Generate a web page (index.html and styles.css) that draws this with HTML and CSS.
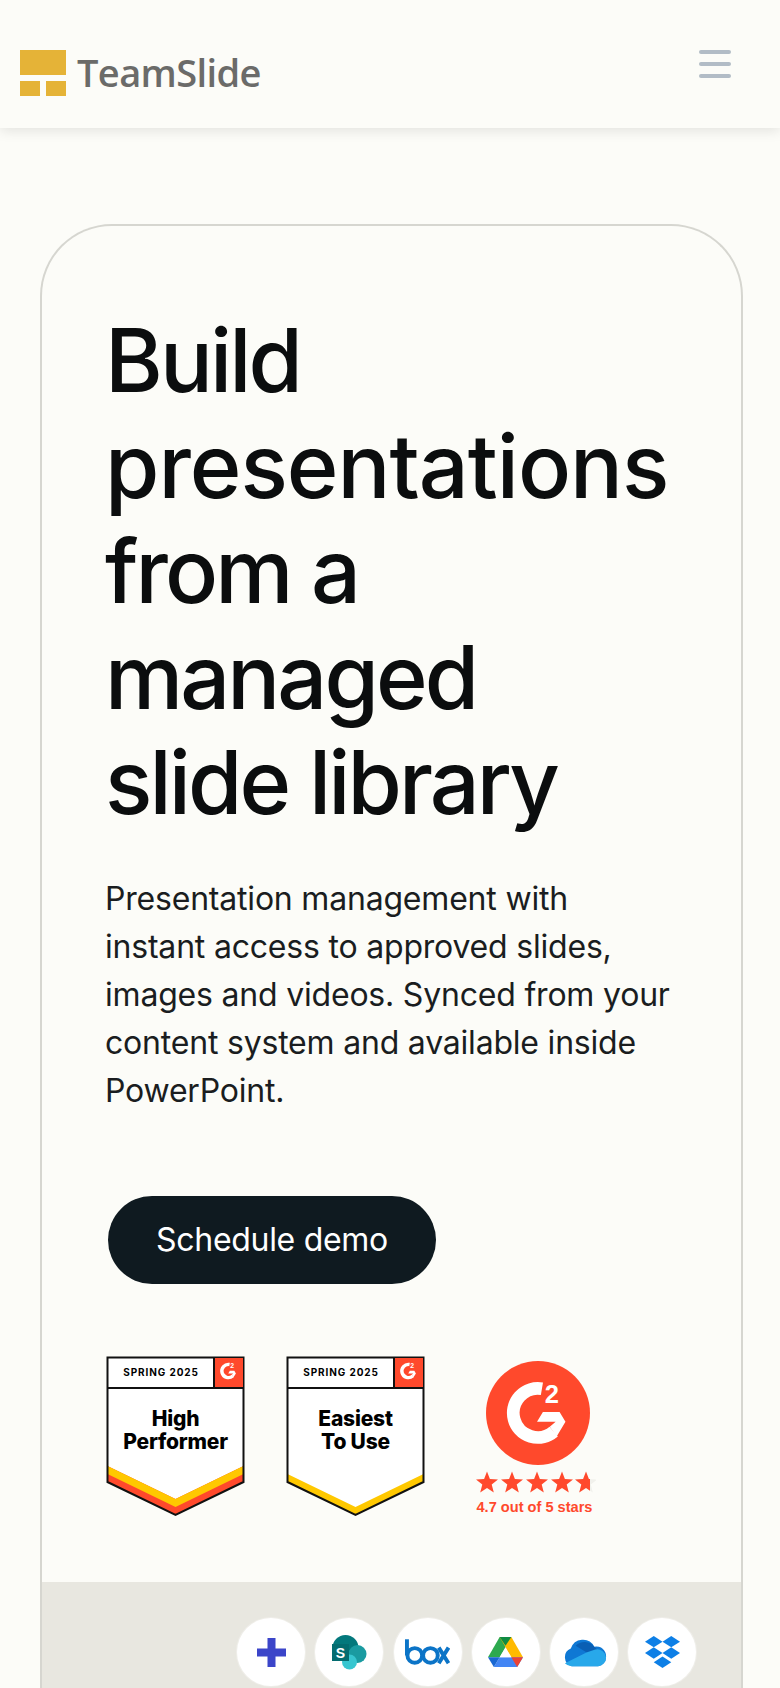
FILE: index.html
```html
<!DOCTYPE html>
<html lang="en">
<head>
    <meta charset="UTF-8">
    <meta name="viewport" content="width=device-width, initial-scale=1.0">
    <title>TeamSlide</title>
    <link rel="stylesheet" href="styles.css">
</head>
<body>
    <svg class="svg-defs" width="0" height="0">
        <defs>
            <symbol id="g2-mark" viewBox="0 0 106 106">
                <path d="M57 28.300 A25 25 0 1 0 69 72" fill="none" stroke="#fff" stroke-width="13"/>
                <polygon points="52,62 58,52 75,52 81,62 72,77 65,67 71,62" fill="#fff"/>
                <text x="60" y="43" class="g2-two">2</text>
            </symbol>
            <polygon id="star" points="11,0.500 13.900,8 22,8.600 15.700,13.600 17.800,21.500 11,17 4.200,21.500 6.300,13.600 0,8.600 8.100,8"/>
            <clipPath id="star-clip"><rect x="0" y="0" width="15" height="24"/></clipPath>
        </defs>
    </svg>

    <header class="site-header">
        <a class="logo" href="#">
            <span class="logo-mark">
                <span class="logo-top"></span>
                <span class="logo-bottom"><span></span><span></span></span>
            </span>
            <span class="logo-text">TeamSlide</span>
        </a>
        <div class="menu-icon"><span></span><span></span><span></span></div>
    </header>

    <main class="hero-wrap">
        <section class="hero-card">
            <div class="hero-content">
                <h1>Build <span class="wide-word">presentations</span> from a managed slide library</h1>
                <p class="hero-text">Presentation management with instant access to approved slides, images and videos. Synced from your content system and available inside PowerPoint.</p>
                <a class="demo-btn" href="#">Schedule demo</a>

                <div class="badges">
                    <div class="badge">
                        <svg class="badge-shape" viewBox="0 0 139 161">
                            <polygon points="1.500,1.500 137.500,1.500 137.500,126 69.500,159 1.500,126" fill="#fff"/>
                            <polygon points="1.500,110 69.500,143 137.500,110 137.500,126 69.500,159 1.500,126" fill="#ff492c"/>
                            <polygon points="1.500,110 69.500,143 137.500,110 137.500,118 69.500,151 1.500,118" fill="#ffc800"/>
                            <polygon points="1.500,1.500 137.500,1.500 137.500,126 69.500,159 1.500,126" fill="none" stroke="#111" stroke-width="2"/>
                            <rect x="108" y="2" width="29" height="30" fill="#ff492c"/>
                            <path d="M1.500 32 H137.500 M108 2 V32" stroke="#111" stroke-width="2"/>
                            <use href="#g2-mark" x="108.500" y="1" width="28" height="28"/>
                        </svg>
                        <span class="badge-season">SPRING 2025</span>
                        <span class="badge-title">High<br>Performer</span>
                    </div>
                    <div class="badge">
                        <svg class="badge-shape" viewBox="0 0 139 161">
                            <polygon points="1.500,1.500 137.500,1.500 137.500,126 69.500,159 1.500,126" fill="#fff"/>
                            <polygon points="1.500,118 69.500,151 137.500,118 137.500,126 69.500,159 1.500,126" fill="#ffc800"/>
                            <polygon points="1.500,1.500 137.500,1.500 137.500,126 69.500,159 1.500,126" fill="none" stroke="#111" stroke-width="2"/>
                            <rect x="108" y="2" width="29" height="30" fill="#ff492c"/>
                            <path d="M1.500 32 H137.500 M108 2 V32" stroke="#111" stroke-width="2"/>
                            <use href="#g2-mark" x="108.500" y="1" width="28" height="28"/>
                        </svg>
                        <span class="badge-season">SPRING 2025</span>
                        <span class="badge-title">Easiest<br>To Use</span>
                    </div>
                    <div class="rating">
                        <svg class="g2-circle" viewBox="0 0 106 106">
                            <circle cx="53" cy="53" r="53" fill="#ff492c"/>
                            <use href="#g2-mark" width="106" height="106"/>
                        </svg>
                        <svg class="g2-stars" viewBox="0 0 120 24">
                            <use href="#star" x="0" fill="#ff492c"/>
                            <use href="#star" x="25" fill="#ff492c"/>
                            <use href="#star" x="50" fill="#ff492c"/>
                            <use href="#star" x="75" fill="#ff492c"/>
                            <g transform="translate(99 0)"><use href="#star" fill="#f1f1ec"/><use href="#star" fill="#ff492c" clip-path="url(#star-clip)"/></g>
                        </svg>
                        <span class="rating-text">4.7 out of 5 stars</span>
                    </div>
                </div>
            </div>

            <div class="integrations">
                <span class="int-circle">
                    <svg class="int-plus" viewBox="0 0 29 29"><path d="M10.500 0 h8 v10.500 H29 v8 H18.500 V29 h-8 V18.500 H0 v-8 h10.500z" fill="#3b45c9"/></svg>
                </span>
                <span class="int-circle">
                    <svg viewBox="0 0 35 35">
                        <circle cx="13.500" cy="13" r="13" fill="#03787c"/>
                        <circle cx="25.500" cy="19" r="9" fill="#1a9ba1"/>
                        <circle cx="17.500" cy="27" r="7.500" fill="#37c6d0"/>
                        <rect x="0" y="9" width="17" height="17" fill="#036c70"/>
                        <text x="8.500" y="22.500" class="sp-letter">S</text>
                    </svg>
                </span>
                <span class="int-circle">
                    <svg viewBox="0 0 46 26" class="int-box">
                        <g fill="none" stroke="#0b74c7" stroke-width="4">
                            <path d="M2 0 V16.500"/>
                            <circle cx="10" cy="16.500" r="7.500"/>
                            <circle cx="26" cy="16.500" r="7.500"/>
                            <path d="M34.500 8.500 L44.500 24.500 M44.500 8.500 L34.500 24.500"/>
                        </g>
                    </svg>
                </span>
                <span class="int-circle">
                    <svg viewBox="0 0 36 32">
                        <polygon points="12,0 24,0 12,21 0,21" fill="#2da94f"/>
                        <polygon points="12,0 24,0 36,21 24,21" fill="#ffba00"/>
                        <polygon points="12,0 24,0 18,9" fill="#0f8b43"/>
                        <polygon points="6,31 30,31 36,21 12,21" fill="#4285f4"/>
                        <polygon points="0,21 12,21 6,31" fill="#1967d2"/>
                        <polygon points="24,21 36,21 30,31" fill="#ea4335"/>
                        <polygon points="18,11 12,21 24,21" fill="#fff"/>
                    </svg>
                </span>
                <span class="int-circle">
                    <svg viewBox="0 0 46 30" class="int-wide">
                        <path d="M10 29 A9.500 9.500 0 0 1 9 11 A13 13 0 0 1 33 9 A10 10 0 0 1 45 20 A9 9 0 0 1 37 29z" fill="#0f78d4"/>
                        <path d="M14 8 A13 13 0 0 1 33 9 L36 12 L27 16z" fill="#0a5fb4"/>
                        <path d="M10 29 H37 A9 9 0 0 0 45 20 A9 9 0 0 0 34 12 L25 15 L3 26 A9 9 0 0 0 10 29z" fill="#28a8ea"/>
                    </svg>
                </span>
                <span class="int-circle">
                    <svg viewBox="0 0 34 32">
                        <g fill="#0d7fe6">
                            <polygon points="8.500,0 17,5.500 8.500,11 0,5.500"/>
                            <polygon points="25.500,0 34,5.500 25.500,11 17,5.500"/>
                            <polygon points="8.500,11 17,16.500 8.500,22 0,16.500"/>
                            <polygon points="25.500,11 34,16.500 25.500,22 17,16.500"/>
                            <polygon points="17,20 25.500,25.500 17,31 8.500,25.500"/>
                        </g>
                    </svg>
                </span>
            </div>
        </section>
    </main>
</body>
</html>
```

FILE: styles.css
```css
* {
    box-sizing: border-box;
}
body {
    margin: 0;
    height: 1688px;
    overflow: hidden;
    font-family: Inter, "Liberation Sans", sans-serif;
    background-color: #fcfcf8;
    color: #0b0d0e;
}
.svg-defs {
    display: block;
    height: 0;
}
.site-header {
    height: 128px;
    padding: 50px 49px 0 20px;
    display: flex;
    justify-content: space-between;
    align-items: flex-start;
    background-color: #fcfcf8;
    box-shadow: 0 3px 12px rgba(0,0,0,0.1);
}
.logo {
    display: flex;
    gap: 11px;
    text-decoration: none;
}
.logo-mark {
    width: 46px;
    height: 46px;
    display: flex;
    flex-direction: column;
    gap: 6px;
}
.logo-top {
    height: 25px;
    background-color: #e5b337;
}
.logo-bottom {
    flex: 1;
    display: flex;
    gap: 6px;
}
.logo-bottom span {
    flex: 1;
    background-color: #e5b337;
}
.logo-text {
    font-family: "Open Sans", sans-serif;
    font-size: 38px;
    line-height: 46px;
    margin-top: -1px;
    font-weight: 600;
    letter-spacing: -0.6px;
    color: #6b6b69;
}
.menu-icon {
    width: 32px;
    display: flex;
    flex-direction: column;
    gap: 8px;
}
.menu-icon span {
    height: 4px;
    border-radius: 2px;
    background-color: #b2bcc6;
}
.hero-wrap {
    padding: 96px 37px 0 40px;
}
.hero-card {
    border: 2px solid #d6d6d0;
    border-bottom: none;
    border-radius: 72px 72px 0 0;
    height: 1464px;
    overflow: hidden;
}
.hero-content {
    padding: 82px 60px 0 63px;
    height: 1356px;
}
h1 {
    margin: 0;
    max-width: 570px;
    font-size: 88px;
    line-height: 105.500px;
    font-weight: 500;
    letter-spacing: -2.900px;
}
.wide-word {
    letter-spacing: -1px;
}
.hero-text {
    margin: 39px 0 0;
    max-width: 567px;
    font-size: 32px;
    line-height: 48px;
    letter-spacing: -0.2px;
    color: #1a1d20;
}
.demo-btn {
    display: flex;
    align-items: center;
    justify-content: center;
    width: 328px;
    height: 88px;
    margin: 81px 0 0 3px;
    border-radius: 44px;
    background-color: #0f1a20;
    color: #fff;
    font-size: 32px;
    font-weight: 400;
    letter-spacing: -0.3px;
    text-decoration: none;
}
.badges {
    display: flex;
    margin: 72px 0 0 1px;
    gap: 41px;
}
.badge {
    position: relative;
    width: 139px;
    height: 161px;
    text-align: center;
    color: #000;
}
.badge-shape {
    display: block;
    width: 139px;
    height: 161px;
}
.badge-season {
    position: absolute;
    top: 9px;
    left: 2px;
    width: 106px;
    font-size: 10px;
    line-height: 14px;
    font-weight: 700;
    letter-spacing: 0.9px;
}
.badge-title {
    position: absolute;
    top: 51px;
    left: 0;
    right: 0;
    font-size: 21px;
    line-height: 23px;
    font-weight: 800;
    letter-spacing: -0.2px;
}
.rating {
    width: 120px;
    margin-left: 10px;
    display: flex;
    flex-direction: column;
    align-items: center;
}
.g2-circle {
    width: 104px;
    height: 106px;
    margin: 4px 0 0 3px;
    display: block;
}
.g2-two {
    font-family: "Liberation Sans", sans-serif;
    font-size: 26px;
    font-weight: 700;
    fill: #fff;
}
.g2-stars {
    width: 120px;
    height: 24px;
    margin-top: 5px;
    display: block;
}
.rating-text {
    font-family: "Liberation Sans", sans-serif;
    font-size: 14.600px;
    line-height: 18px;
    margin: 3px 3px 0 0;
    font-weight: 700;
    color: #ff492c;
    white-space: nowrap;
}
.integrations {
    background-color: #e8e7e0;
    height: 108px;
    padding: 36px 0 0 195px;
    display: flex;
    gap: 10.300px;
}
.int-circle {
    flex: none;
    width: 68px;
    height: 68px;
    border-radius: 50%;
    background-color: #fff;
    box-shadow: 0 0 0 1px #efeee9;
    display: flex;
    align-items: center;
    justify-content: center;
}
.int-circle svg {
    width: 35px;
    height: 35px;
}
.int-circle svg.int-plus {
    width: 29px;
    height: 29px;
}
.int-circle svg.int-wide,
.int-circle svg.int-box {
    width: 45px;
}
.int-circle svg.int-box {
    height: 26px;
}
.sp-letter {
    font-family: "Liberation Sans", sans-serif;
    font-size: 14px;
    font-weight: 700;
    fill: #fff;
    text-anchor: middle;
}
```
